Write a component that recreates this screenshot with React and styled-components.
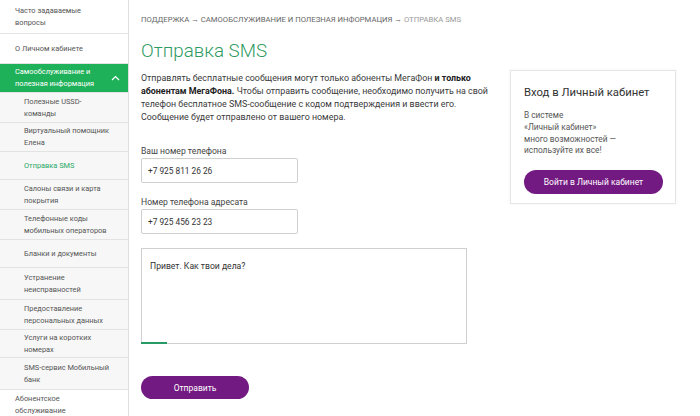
import React from "react";
import styled, { createGlobalStyle } from "styled-components";

const Global = createGlobalStyle`
  html, body { margin: 0; padding: 0; background: #fff; }
  body { font-family: Roboto, "Noto Sans", Arial, sans-serif; color: #333; }
  * { box-sizing: border-box; }
`;

const Page = styled.div`
  width: 700px;
  height: 416px;
  overflow: hidden;
  display: flex;
  background: #fff;
`;

const Sidebar = styled.nav`
  width: 129px;
  flex-shrink: 0;
  border-right: 1px solid #dedede;
  display: flex;
  flex-direction: column;
`;

const NavItem = styled.div`
  display: flex;
  align-items: center;
  justify-content: space-between;
  min-height: ${(p) => p.$h || 29}px;
  padding: ${(p) => (p.$sub ? "2px 6px 2px 24px" : "2px 8px 2px 15px")};
  border-bottom: 1px solid #e3e3e3;
  font-size: 7.4px;
  line-height: 12px;
  white-space: nowrap;
  background: ${(p) => (p.$active ? "#1fb15a" : p.$sub ? "#f7f7f7" : "#fff")};
  color: ${(p) => (p.$active ? "#fff" : p.$current ? "#2aa866" : "#555")};
`;

const Main = styled.main`
  flex: 1;
  padding: 15px 24px 0 12px;
  display: flex;
  flex-direction: column;
`;

const Crumbs = styled.div`
  font-size: 7.7px;
  line-height: 10px;
  letter-spacing: 0;
  text-transform: uppercase;
  color: #666;
  white-space: nowrap;
  span { color: #999; }
`;

const Columns = styled.div`
  display: flex;
  gap: 10px;
  align-items: flex-start;
`;

const Left = styled.div`
  width: 359px;
  display: flex;
  flex-direction: column;
`;

const Title = styled.h1`
  margin: 14px 0 0;
  font-size: 18.8px;
  line-height: 24px;
  font-weight: 300;
  color: #2f9a62;
`;

const Para = styled.p`
  margin: 9px 0 0;
  font-size: 8.9px;
  line-height: 13px;
  color: #3a3a3a;
  white-space: nowrap;
  b { font-weight: 700; color: #222; }
`;

const Label = styled.div`
  margin-top: ${(p) => p.$mt}px;
  font-size: 8.6px;
  line-height: 12px;
  color: #444;
`;

const Input = styled.div`
  margin-top: 1px;
  width: 157px;
  height: 25px;
  border: 1px solid #cfcfcf;
  border-radius: 2px;
  padding-left: 6px;
  display: flex;
  align-items: center;
  font-size: 8.3px;
  color: #333;
`;

const TextBox = styled.div`
  margin-top: 14px;
  width: 326px;
  height: 96px;
  border: 1px solid #d0d0d0;
  display: flex;
  flex-direction: column;
  font-size: 8.6px;
  color: #333;
`;

const TextContent = styled.div`
  padding: 11px 8px 0;
  line-height: 12px;
  flex: 1;
`;

const Progress = styled.div`
  width: 26px;
  height: 2px;
  margin-bottom: -1px;
  margin-left: -1px;
  background: #279b66;
`;

const PillButton = styled.div`
  width: ${(p) => p.$w}px;
  height: ${(p) => p.$h}px;
  margin-top: ${(p) => p.$mt || 0}px;
  border-radius: 12px;
  background: #731982;
  color: #fff;
  font-size: 8.5px;
  display: flex;
  align-items: center;
  justify-content: center;
`;

const Card = styled.aside`
  margin-top: 45px;
  width: 166px;
  height: 134px;
  border: 1px solid #e6e6e6;
  box-shadow: 0 0 3px rgba(0, 0, 0, 0.06);
  padding: 15px 12px 0 13px;
  display: flex;
  flex-direction: column;
`;

const CardTitle = styled.div`
  font-size: 11.3px;
  line-height: 14px;
  color: #333;
  white-space: nowrap;
`;

const CardText = styled.div`
  margin-top: 10px;
  font-size: 8.3px;
  line-height: 11.8px;
  color: #555;
  white-space: nowrap;
`;

const Chevron = () => (
  <svg width="9" height="6" viewBox="0 0 9 6">
    <polyline points="1,5 4.5,1.5 8,5" fill="none" stroke="#fff" strokeWidth="1.2" />
  </svg>
);

export default function App() {
  return (
    <>
      <Global />
      <Page>
        <Sidebar>
          <NavItem $h={34}>
            <div>Часто задаваемые<br />вопросы</div>
          </NavItem>
          <NavItem $h={30}>О Личном кабинете</NavItem>
          <NavItem $active $h={29}>
            <div>Самообслуживание и<br />полезная информация</div>
            <Chevron />
          </NavItem>
          <NavItem $sub $h={30}>
            <div>Полезные USSD-<br />команды</div>
          </NavItem>
          <NavItem $sub $h={29}>
            <div>Виртуальный помощник<br />Елена</div>
          </NavItem>
          <NavItem $sub $current $h={28}>Отправка SMS</NavItem>
          <NavItem $sub $h={30}>
            <div>Салоны связи и карта<br />покрытия</div>
          </NavItem>
          <NavItem $sub $h={30}>
            <div>Телефонные коды<br />мобильных операторов</div>
          </NavItem>
          <NavItem $sub $h={28}>Бланки и документы</NavItem>
          <NavItem $sub $h={32}>
            <div>Устранение<br />неисправностей</div>
          </NavItem>
          <NavItem $sub $h={30}>
            <div>Предоставление<br />персональных данных</div>
          </NavItem>
          <NavItem $sub $h={28}>
            <div>Услуги на коротких<br />номерах</div>
          </NavItem>
          <NavItem $sub $h={32}>
            <div>SMS-сервис Мобильный<br />банк</div>
          </NavItem>
          <NavItem $h={30}>
            <div>Абонентское<br />обслуживание</div>
          </NavItem>
        </Sidebar>
        <Main>
          <Crumbs>
            Поддержка → Самообслуживание и полезная информация → <span>Отправка SMS</span>
          </Crumbs>
          <Columns>
            <Left>
              <Title>Отправка SMS</Title>
              <Para>
                Отправлять бесплатные сообщения могут только абоненты МегаФон <b>и только</b>
                <br />
                <b>абонентам МегаФона.</b> Чтобы отправить сообщение, необходимо получить на свой
                <br />
                телефон бесплатное SMS-сообщение с кодом подтверждения и ввести его.
                <br />
                Сообщение будет отправлено от вашего номера.
              </Para>
              <Label $mt={21}>Ваш номер телефона</Label>
              <Input>+7 925 811 26 26</Input>
              <Label $mt={13}>Номер телефона адресата</Label>
              <Input>+7 925 456 23 23</Input>
              <TextBox>
                <TextContent>Привет. Как твои дела?</TextContent>
                <Progress />
              </TextBox>
              <PillButton $w={108} $h={23} $mt={32}>Отправить</PillButton>
            </Left>
            <Card>
              <CardTitle>Вход в Личный кабинет</CardTitle>
              <CardText>
                В системе
                <br />
                «Личный кабинет»
                <br />
                много возможностей —
                <br />
                используйте их все!
              </CardText>
              <PillButton $w={139} $h={24} $mt={13}>Войти в Личный кабинет</PillButton>
            </Card>
          </Columns>
        </Main>
      </Page>
    </>
  );
}
